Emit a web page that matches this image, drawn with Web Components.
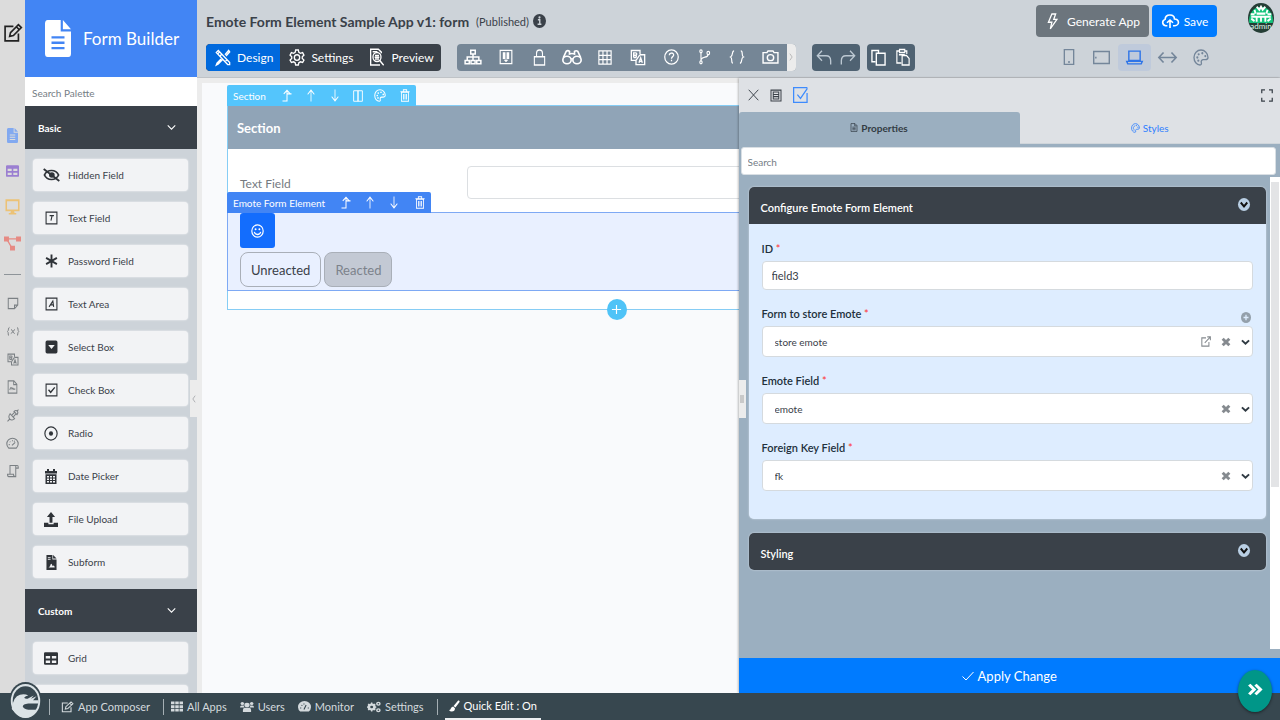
<!DOCTYPE html>
<html lang="en">
<head>
<meta charset="utf-8">
<meta name="viewport" content="width=device-width, initial-scale=1">
<title>Form Builder</title>
<style>
    body {
        margin: 0;
        font-family: Lato, "Open Sans", sans-serif;
        font-size: 12px;
        color: #3a4149;
        background: #cdd3d9;
    }
</style>
</head>
<body>
<fb-app></fb-app>

<script>
// shared reset, put in front of each component's own styles
const BASE = `
    *, *::before, *::after { box-sizing: border-box; }
    button, input, select { font: inherit; color: inherit; margin: 0; }
    button { border: 0; padding: 0; background: none; cursor: pointer; display: flex; align-items: center; justify-content: center; }
    a { color: inherit; text-decoration: none; }
`;

// stroke icons unless the shape says otherwise, all on a 24 x 24 grid
const F = 'fill="currentColor" stroke="none"';
const PALETTE = `<path d="M12 1.500C6 1.500 1.500 6 1.500 12s4 10.500 9 10.500c2 0 2.500-1.500 2-3-.8-2.500.5-4.500 3-4.500h3c2 0 4-1 4-3C22.500 6 17.500 1.500 12 1.500z"/><circle cx="6.500" cy="12" r="1.600" ${F}/><circle cx="8.500" cy="7.500" r="1.600" ${F}/><circle cx="14" cy="6" r="1.600" ${F}/><circle cx="18.500" cy="10" r="1.600" ${F}/><circle cx="8" cy="16.500" r="1.600" ${F}/>`;
const LANG = `<path d="M9 16H2V2h13v5M15 8h7v14H9v-6"/><path d="M5.500 12V5.500h3a1.600 1.600 0 0 1 0 3.300h-3M8.500 9a1.600 1.600 0 0 1 0 3h-3M13.500 19.500l2.500-7 2.500 7M14.500 17.500h3M15 8l-6 8"/>`;
const ICONS = {
    edit: `<path d="M12.500 4H2.500v17.500h16v-9"/><path d="M8 16l1-4.500L18.500 2l3.500 3.500L12.500 15zM16 4.500L19.500 8"/>`,
    file: `<path ${F} d="M0 2.500Q0 0 2.500 0h12v7.500H24V21.500q0 2.500-2.500 2.500h-19Q0 24 0 21.500zM16.500 0L24 6h-7.500zM6 10.500V12h12v-1.500zm0 3.500v1.500h12V14zm0 3.500V19h12v-1.500z" fill-rule="evenodd"/>`,
    table: `<path ${F} fill-rule="evenodd" d="M2 2h20q2 0 2 2v16q0 2-2 2H2q-2 0-2-2V4q0-2 2-2zm1 6v4h7.500V8zm10.500 0v4H21V8zM3 15v4h7.500v-4zm10.500 0v4H21v-4z"/>`,
    desktop: `<path stroke-width="2.500" d="M2 3h20v13.500H2z"/><path ${F} d="M9.500 17h5l.8 3H18v2H6v-2h2.700z"/>`,
    flow: `<path ${F} d="M0 2h7v7H0zM17 2h7v7h-7zM8.500 15h7v7h-7z"/><path d="M4 5.500h16M4 6l7 12" stroke-width="2"/>`,
    note: `<path d="M2.500 2.500h19V15L15 21.500H2.500zM15 21v-6h6"/>`,
    varx: `<path d="M5 3C2 3 4 10 1 12c3 2 0 9 3 9M20 3c3 0 1 7 3.500 9-3 2-1 9-3.500 9M8 7.500c3 0 4 9 7.500 9M16 7.500c-2 0-6 9-8.500 9"/>`,
    lang: LANG,
    fileimg: `<path d="M2.500 1.500H15l6.500 6v15h-19zM14.500 2v6H21M6 17c2-5 3.500-5 5-1.500 1-2 2-2 3 0h4"/>`,
    plug: `<path d="M1 23l5-5M6.500 9l8.500 8.500c-3 3.500-7 3.500-9.500 1s-2.500-6.500 1-9.500zM5.500 8l10.500 10.500M10 11l4.500-4.500M13 14l5-5M14 4.500c3-2.500 5-2 6.500-.5s2 3.500-.5 6.500zM20 4l3-3"/>`,
    gauge: `<path d="M5 20.500a10.500 10.500 0 1 1 14 0z"/><path d="M11 15.500l6-5.500M5 14h2M7 8.500l1 1M12 6v2M16 7l-1 1.500"/>`,
    scroll: `<path d="M6 17V2.500h14.500q2 0 2 3V7h-5M17.500 7V3M17.500 7v14.500h-14q-2.500 0-2.500-4h12q0 4 3 4"/>`,
    eyeoff: `<path d="M2 12c4-9 16-9 20 0-4 9-16 9-20 0z" stroke-width="2.500"/><circle cx="12.500" cy="12" r="4" ${F}/><path d="M1 3l22 18" stroke-width="2.500"/>`,
    boxt: `<path d="M2 2h20v20H2z"/><path d="M8.500 8h8M13 8.500l-2 8"/>`,
    boxa: `<path d="M2 2h20v20H2z"/><path d="M7.500 17l7-10 1.500 10M10 13.500h5"/>`,
    asterisk: `<path d="M12 1v22M2 6.500l20 11M22 6.500l-20 11" stroke-width="3.500"/>`,
    boxcaret: `<path ${F} fill-rule="evenodd" d="M4 1h16q3 0 3 3v16q0 3-3 3H4q-3 0-3-3V4q0-3 3-3zm2 7.500l6 7 6-7z"/>`,
    boxcheck: `<path d="M2 2h20v20H2z"/><path d="M6.500 11.500l4 4.500 7.500-8.500" stroke-width="2.500"/>`,
    radio: `<circle cx="12" cy="12" r="10.500"/><circle cx="12" cy="12" r="3.500" ${F}/>`,
    calendar: `<path ${F} fill-rule="evenodd" d="M4 0h4v3h8V0h4v3h4v4H0V3h4zM1 8.500h22V24H1zm3 2.500v2.500h4V11zm6 0v2.500h4V11zm6 0v2.500h4V11zM4 15v2.500h4V15zm6 0v2.500h4V15zm6 0v2.500h4V15zM4 19v2.500h4V19zm6 0v2.500h4V19zm6 0v2.500h4V19z"/>`,
    upload: `<path ${F} d="M12 0l7 8h-4.500v9h-5V8H5zM0 17h7.500v2.500h9V17H24v7H0z"/>`,
    subform: `<path ${F} fill-rule="evenodd" d="M1 0h13v7h9v17H1zM15.500 0L23 5.500h-7.500zM4 3v1.500h6V3zm0 3v1.500h6V6zm1 14h14c-1-3-2-4-4.500-2-1-2-2-4-3-4-2 0-1.500 5-6.500 6z"/>`,
    down: `<path d="M2 6.500l10 10 10-10" stroke-width="2.800"/>`,
    left: `<path d="M19 2L5 12l14 10" stroke-width="2.500"/>`,
    right: `<path d="M5 2l14 10L5 22" stroke-width="2.500"/>`,
    design: `<path d="M2 5l3-3 17 17v3h-3zM15 8l5.500-6L22 4l-5.500 6M9 14l-6 6-1 2.500L5 21l6-6M7 4L4 7M10 7.500L8 9.500M18 15l-2 2"/>`,
    gear: `<path d="M10 1.500h4l.8 3.300 2.300 1.300 3.300-1 2 3.500-2.500 2.300v2.400l2.500 2.300-2 3.500-3.300-1-2.300 1.300-.8 3.300h-4l-.8-3.300-2.300-1.300-3.300 1-2-3.500 2.500-2.300v-2.400L1.600 8.600l2-3.500 3.300 1 2.300-1.300z"/><circle cx="12" cy="12" r="4"/>`,
    preview: `<path d="M18.500 7V5.500L14 1.500H2.500v21h14"/><circle cx="12" cy="12" r="6"/><path d="M9 10h6M8.500 12.200h7M9 14.500h6M16 16.500l6 6.500M5.500 5h7"/>`,
    info: `<circle cx="12" cy="12" r="12" ${F}/><path d="M9 10h3.500v7M8.500 17.500h7" stroke="#cdd3d9" stroke-width="2.500"/><circle cx="12" cy="6" r="2" fill="#cdd3d9" stroke="none"/>`,
    sitemap: `<path d="M9 3h6v5H9zM1.500 16.500H7V21H1.500zM9.300 16.500h5.500V21H9.300zM17 16.500h5.500V21H17zM12 8v8M4.300 16v-4h15.500v4"/>`,
    receipt: `<path d="M2 2h20v20H2z"/><path ${F} d="M6.500 5h4v10h-4zM13.500 5h4v10h-4zM8 16h8l-4 4z"/><path d="M12 5v11" stroke-width="1.200"/>`,
    lock: `<path d="M2.500 11h19v11.500h-19zM6.500 11V6c0-6 11-6 11 0v5"/>`,
    binoculars: `<circle cx="6" cy="16" r="5"/><circle cx="18" cy="16" r="5"/><path d="M1.500 13L5 4.500q2-2 4 0V8q3-1.500 6 0V4.500q2-2 4 0L22.500 13M11 15q1-1 2 0"/>`,
    grid: `<path d="M1.500 1.500h21v21h-21zM1.500 8.500h21M1.500 15.500h21M8.500 1.500v21M15.500 1.500v21"/>`,
    help: `<circle cx="12" cy="12" r="10.800"/><path d="M8.500 9.500c0-4.500 7-4.500 7-.5 0 2.500-3.500 2.500-3.500 5.500M12 16v2.500"/>`,
    branch: `<circle cx="5.500" cy="3.500" r="2.200"/><circle cx="5.500" cy="20" r="2.200"/><circle cx="19" cy="6" r="2.500"/><path d="M5.500 6v12M18.500 8.500c0 5-10 2.500-12.500 7"/>`,
    braces: `<path d="M7 1.500C2.500 1.500 6 10 1 12c4 2 0 10.500 4 10.500M18.500 1.500c4.500 0 .5 8.500 4.500 10.500-5 2-1.500 10.500-6 10.500"/>`,
    camera: `<path d="M1.500 5.500H7L8.500 3h7L17 5.500h5.500V21h-21z"/><circle cx="12" cy="13" r="4.500"/>`,
    undo: `<path d="M9 2.500L2 9.500l7 7M2 9.500h13q7 0 7 7V22"/>`,
    redo: `<path d="M15 2.500l7 7-7 7M22 9.500H9q-7 0-7 7V22"/>`,
    copy: `<path d="M7 18H1.500V2H12v3M8.500 6h14v16.500h-14z" stroke-width="2.200"/>`,
    paste: `<path d="M9 20H1.500V4H5M15 4h3.500v4M6 2h9v4H6zM10.500 10H18l4.500 4v8.500h-12zM5 9h10"/>`,
    bolt: `<path d="M11 1.500h6L14 9h5L8.500 22.500 11 13H5.500z"/>`,
    cloud: `<path d="M8.500 19H6a5 5 0 0 1-.5-9.500C6 1 17.500 1 18 9a5 5 0 0 1 .5 10H16M12 22.500V11M8 14.500l4-4 4 4" stroke-width="2.200"/>`,
    phone: `<path d="M5 1h14v22H5zM10.500 19.500h3"/>`,
    tablet: `<path d="M1 3.500h22v17H1zM4 11v2.500"/>`,
    laptop: `<path d="M4 3h16v13H4zM1 17.500h22L21.500 21h-19z"/>`,
    arrows: `<path d="M1 12h22M7 5l-6 7 6 7M17 5l6 7-6 7"/>`,
    palette: PALETTE,
    close: `<path d="M1.500 1.500l21 21M22.500 1.500l-21 21"/>`,
    form: `<path d="M2 2h20v20H2zM6.500 5.500h11v13h-11zM6.500 10h11M6.500 14h11"/>`,
    check: `<path d="M1 13l7 7L23 4"/>`,
    tick: `<path d="M22.500 9v14H1V1h22M7 11.500l5 5.500L23 2"/>`,
    expand: `<path d="M1.500 8V1.500H8M16 1.500h6.500V8M22.500 16v6.500H16M8 22.500H1.500V16" stroke-width="2.500"/>`,
    level: `<path d="M3 22h9V3M5.500 9L12 2.500 18.500 9M12 9h9"/>`,
    up: `<path d="M12 23V2M4 10l8-8 8 8"/>`,
    downarr: `<path d="M12 1v21M4 14l8 8 8-8"/>`,
    columns: `<path d="M1.500 1.500H12v21H1.500zM12 1.500h10.500v21H12z"/>`,
    trash: `<path d="M3.500 6h17v16.500h-17zM1 5h22M8 4V1.500h8V4M8.500 9v10.500M12 9v10.500M15.500 9v10.500"/>`,
    smile: `<circle cx="12" cy="12" r="10.500" stroke-width="2.200"/><circle cx="8.500" cy="9" r="1.800" ${F}/><circle cx="15.500" cy="9" r="1.800" ${F}/><path d="M6 13.500c1.500 6 10.500 6 12 0" stroke-width="2.200"/>`,
    plus: `<path d="M12 2v20M2 12h20" stroke-width="2.500"/>`,
    doc: `<path d="M3 1.500h12L21 7v15.500H3zM14 2v5.500h6M7 11h10M7 14.500h10M7 18h10"/>`,
    chevcircle: `<circle cx="12" cy="12" r="12" fill="#b9cfe4" stroke="none"/><path d="M5.500 8.500l6.500 7 6.500-7" stroke="#111" stroke-width="4"/>`,
    pluscircle: `<circle cx="12" cy="12" r="12" ${F}/><path d="M12 6v12M6 12h12" stroke="#deedff" stroke-width="3"/>`,
    external: `<path d="M12 4H2v18h17v-9M15 2h7.500v7M22 2.500L9 15" stroke-width="2.500"/>`,
    times: `<path d="M4 4l16 16M20 4L4 20" stroke-width="7"/>`,
    caret: `<path d="M2.500 7l9.500 10 9.500-10" stroke-width="5"/>`,
    dbl: `<path d="M2 3l8 9-8 9M12 3l8 9-8 9" stroke-width="5"/>`,
    th: `<path ${F} d="M0 1h7v6H0zM8.500 1h7v6h-7zM17 1h7v6h-7zM0 9h7v6H0zM8.500 9h7v6h-7zM17 9h7v6h-7zM0 17h7v6H0zM8.500 17h7v6h-7zM17 17h7v6h-7z"/>`,
    users: `<g ${F}><circle cx="12" cy="8" r="4.500"/><circle cx="4" cy="5" r="3"/><circle cx="20" cy="5" r="3"/><path d="M5 22v-4q0-4.500 4-4.500h6q4 0 4 4.500v4zM0 13q0-4 3-4h3.500q0 3 1.500 4zM24 13q0-4-3-4h-3.500q0 3-1.500 4z"/></g>`,
    tacho: `<path ${F} d="M4 21a12 12 0 1 1 16 0z"/><path d="M11 17l4-9M4 14h2M6.500 8l1.500 1.500M18 14h2M11 5v2" stroke="#37474f"/>`,
    cogs: `<circle cx="8" cy="12" r="5" stroke-width="4"/><path d="M8 3v18M0 12h16M2 6l12 12M14 6L2 18" stroke-width="2.500"/><circle cx="8" cy="12" r="2.500" fill="#37474f" stroke="none"/><circle cx="19.500" cy="5.500" r="2.700" stroke-width="2.500"/><circle cx="19.500" cy="18.500" r="2.700" stroke-width="2.500"/>`,
    brush: `<path ${F} d="M20 1q4-1 3 3L14 15l-4-3zM9 13l4 3.500q0 6.500-7 6.500-4 0-6-3 3 0 4-3t5-4z"/>`,
    logo: `<circle cx="12" cy="12" r="12" fill="#37474f" stroke="none"/><circle cx="12" cy="12" r="10.700" fill="#dbe3e6" stroke="none"/><circle cx="12" cy="12" r="9.300" fill="#37474f" stroke="none"/><path d="M2 17Q3 9 8 8q3.500-.8 6 .5-2 .2-3 1.500 1 .8 2.500.5L18 8.500l-2 2L20 9l-2.500 2.500h4v2H14q-4 .3-4 2 .5 1.500 4 2h6q-3 5-8 5T2 17z" fill="#dbe3e6" stroke="none"/>`,
    avatar: `<circle cx="12" cy="12" r="12" fill="#243d35" stroke="none"/><path d="M1.200 16a11 11 0 1 1 21.600 0z" fill="#14c47c" stroke="none"/><path d="M8 3l2.500 2.500L12 3l1.500 2.500L16 3M2.500 9H6M8 8.500h8M18 9h3.500M3 12.500l3 2M8 11v4M12 10.500v4.500M16 11v4M21 12.500l-3 2M6 5.500l1 3M18 5.500l-1 3M3 11h18" stroke="#fff" stroke-width="1.700"/>`
};

const define = (tag, css, html) => customElements.define(tag, class extends HTMLElement {
    constructor() {
        super();
        this.attachShadow({ mode: "open" });
    }

    connectedCallback() {
        const attr = (name) => this.getAttribute(name) || "";
        const has = (name) => this.hasAttribute(name);
        this.shadowRoot.innerHTML = `<style>${BASE}${css}</style>${typeof html === "function" ? html(attr, has) : html}`;
    }
});

const icon = (name, w, h) => `<fb-icon name="${name}" w="${w}" h="${h || w}"></fb-icon>`;
const iconButton = (name, label, w, h) => `<button type="button" aria-label="${label}">${icon(name, w, h)}</button>`;

define("fb-icon", `
    :host { display: inline-flex; flex: none; }
    svg { display: block; overflow: visible; }
`, (attr) => `
    <svg width="${attr("w")}" height="${attr("h")}" viewBox="0 0 24 24" preserveAspectRatio="none" aria-hidden="true"
        fill="none" stroke="currentColor" stroke-width="2">${ICONS[attr("name")]}</svg>
`);

define("fb-rail", `
    :host { display: flex; flex-direction: column; background: #dcdcdc; color: #7b8084; }
    .home { height: 66px; color: #222; }
    .home, nav button { width: 100%; }
    nav { display: grid; }
    .builders { grid-auto-rows: 36px; margin-top: 51px; }
    .tools { grid-auto-rows: 28px; }
    hr { width: 17px; margin: 13px auto 14px 4px; border: 0; border-top: 1px solid #8e9499; }
    .b1 { color: #82a9f0; } .b2 { color: #9b7fd1; } .b3 { color: #ecc276; } .b4 { color: #e68a83; }
`, `
    <button class="home" type="button" aria-label="Edit">${icon("edit", 20, 20)}</button>
    <nav class="builders">
        <button class="b1" type="button" aria-label="Form">${icon("file", 11, 15)}</button>
        <button class="b2" type="button" aria-label="List">${icon("table", 13, 14)}</button>
        <button class="b3" type="button" aria-label="Userview">${icon("desktop", 15, 18)}</button>
        <button class="b4" type="button" aria-label="Process">${icon("flow", 17)}</button>
    </nav>
    <hr>
    <nav class="tools">
        ${iconButton("note", "Notes", 12, 13)}
        ${iconButton("varx", "Variables", 12, 11)}
        ${iconButton("lang", "Localization", 12, 13)}
        ${iconButton("fileimg", "Resources", 11, 14)}
        ${iconButton("plug", "Plugins", 12, 13)}
        ${iconButton("gauge", "Performance", 13, 13)}
        ${iconButton("scroll", "Logs", 12, 14)}
    </nav>
`);

define("fb-palette-item", `
    :host { display: block; }
    button {
        width: 100%; height: 32px; padding-left: 10px; justify-content: flex-start; gap: 9px;
        font-size: 10px; background: #f2f3f5; border-radius: 4px; box-shadow: 0 0 2px rgba(255, 255, 255, .9);
    }
    .ico { width: 16px; display: flex; justify-content: center; color: #2f3338; }
`, (attr) => `
    <button type="button"><span class="ico">${icon(attr("icon"), attr("w") || 13, attr("h") || 14)}</span><slot></slot></button>
`);

define("fb-palette-group", `
    :host { display: block; }
    .head {
        width: 100%; height: 43px; padding: 0 21px 0 13px; justify-content: space-between;
        background: #3a4149; color: #fff; font-size: 10px; font-weight: 700;
    }
    .items { display: grid; gap: 11px; padding: 10px 9px 11px 8px; }
`, (attr) => `
    <button class="head" type="button">${attr("label")}${icon("down", 9, 9)}</button>
    <div class="items"><slot></slot></div>
`);

define("fb-palette", `
    :host { display: flex; flex-direction: column; min-height: 0; position: relative; background: #cdd3d9; }
    .brand { display: flex; align-items: center; gap: 12px; height: 77px; padding-left: 20px; background: #4285f4; color: #fff; font-size: 17px; }
    .search { width: 100%; height: 29px; padding: 3px 7px 0; border: 0; background: #fff; font-size: 10px; flex: none; }
    .search::placeholder { color: #757d85; opacity: 1; }
    .list { overflow: hidden; flex: 1; }
    .collapse { position: absolute; right: 0; top: 380px; width: 7px; height: 37px; background: #ececec; color: #8b8f94; }
`, `
    <div class="brand">${icon("file", 26, 37)}<span>Form Builder</span></div>
    <input class="search" type="search" placeholder="Search Palette" aria-label="Search Palette">
    <div class="list">
        <fb-palette-group label="Basic">
            <fb-palette-item icon="eyeoff" w="17" h="16">Hidden Field</fb-palette-item>
            <fb-palette-item icon="boxt">Text Field</fb-palette-item>
            <fb-palette-item icon="asterisk">Password Field</fb-palette-item>
            <fb-palette-item icon="boxa">Text Area</fb-palette-item>
            <fb-palette-item icon="boxcaret">Select Box</fb-palette-item>
            <fb-palette-item icon="boxcheck">Check Box</fb-palette-item>
            <fb-palette-item icon="radio" w="14" h="15">Radio</fb-palette-item>
            <fb-palette-item icon="calendar" w="12" h="15">Date Picker</fb-palette-item>
            <fb-palette-item icon="upload" w="14" h="15">File Upload</fb-palette-item>
            <fb-palette-item icon="subform" w="11" h="15">Subform</fb-palette-item>
        </fb-palette-group>
        <fb-palette-group label="Custom">
            <fb-palette-item icon="table" w="14" h="15">Grid</fb-palette-item>
            <fb-palette-item icon="boxt"></fb-palette-item>
        </fb-palette-group>
    </div>
    <button class="collapse" type="button" aria-label="Collapse palette">${icon("left", 4, 8)}</button>
`);

define("fb-header", `
    :host { display: flex; flex-direction: column; height: 78px; padding: 5px 0 0 9px; border-bottom: 1px solid #bfc3c7; background: #cdd3d9; }
    .row { display: flex; align-items: center; }
    .top { height: 32px; }
    .bottom { height: 28px; margin-top: 6px; }
    h1 { margin: 0; font-size: 14px; font-weight: 700; }
    .state { margin-left: 7px; font-size: 11px; }
    .info { margin-left: 4px; }
    .actions { margin-left: auto; display: flex; gap: 3px; height: 32px; color: #fff; }
    .actions button { gap: 7px; border-radius: 4px; }
    .generate { width: 113px; background: #6c757d; }
    .actions .save { width: 65px; gap: 5px; background: #007bff; }
    .avatar { margin: -2px 6px 0 31px; align-self: flex-start; position: relative; display: grid; }
    .avatar span { position: absolute; left: 0; right: 0; bottom: 3px; text-align: center; font-size: 8px; line-height: 8px; color: #dff5ea; }
    .modes, .tools, .pair { display: flex; height: 27px; border-radius: 4px; overflow: hidden; color: #fff; }
    .modes { background: #3a4149; }
    .modes button { gap: 6px; padding: 0 7px 0 9px; }
    .modes .on { background: #0069dd; border-radius: 4px 0 0 4px; }
    .tools { margin-left: 16px; background: #758696; }
    .tools button { width: 33px; }
    .tools .more { width: 9px; background: #ececec; color: #9a9a9a; }
    .pair { margin-left: 16px; background: #4f6272; }
    .pair + .pair { margin-left: 7px; }
    .pair button { width: 24px; color: #fff; }
    .dim button { color: #bcc8d2; }
    .devices { margin-left: auto; margin-right: 63px; display: flex; height: 27px; color: #74869a; }
    .devices button { width: 33px; border-radius: 4px; }
    .devices .on { background: #bfcadb; color: #2f75e8; }
`, `
    <div class="row top">
        <h1>Emote Form Element Sample App v1: form</h1>
        <span class="state">(Published)</span>
        <button class="info" type="button" aria-label="Information">${icon("info", 13, 14)}</button>
        <div class="actions">
            <button class="generate" type="button">${icon("bolt", 15, 17)}Generate App</button>
            <button class="save" type="button">${icon("cloud", 18, 16)}Save</button>
        </div>
        <div class="avatar">${icon("avatar", 26, 30)}<span>admin</span></div>
    </div>
    <div class="row bottom">
        <div class="modes">
            <button class="on" type="button">${icon("design", 16, 17)}Design</button>
            <button type="button">${icon("gear", 16, 17)}Settings</button>
            <button type="button">${icon("preview", 16, 18)}Preview</button>
        </div>
        <div class="tools">
            ${iconButton("sitemap", "Tree", 18, 18)}
            ${iconButton("receipt", "Usage", 14, 16)}
            ${iconButton("lock", "Permission", 13, 17)}
            ${iconButton("binoculars", "Find usages", 20, 18)}
            ${iconButton("grid", "Table view", 14, 15)}
            ${iconButton("lang", "Internationalization", 16, 17)}
            ${iconButton("help", "Tooltip", 15, 16)}
            ${iconButton("branch", "Diff", 13, 16)}
            ${iconButton("braces", "JSON definition", 14, 14)}
            ${iconButton("camera", "Screenshot", 17, 16)}
            <button class="more" type="button" aria-label="More tools">${icon("right", 4, 8)}</button>
        </div>
        <div class="pair dim">${iconButton("undo", "Undo", 16, 17)}${iconButton("redo", "Redo", 16, 17)}</div>
        <div class="pair">${iconButton("copy", "Copy", 15, 17)}${iconButton("paste", "Paste", 14, 18)}</div>
        <div class="devices">
            ${iconButton("phone", "Mobile", 16, 16)}
            ${iconButton("tablet", "Tablet", 17, 17)}
            <button class="on" type="button" aria-label="Desktop">${icon("laptop", 17, 17)}</button>
            ${iconButton("arrows", "Fit width", 19, 17)}
            ${iconButton("palette", "Theme", 16, 17)}
        </div>
    </div>
`);

define("fb-element-bar", `
    :host { display: flex; align-items: center; height: 21px; padding: 0 1px 0 6px; border-radius: 2px 2px 0 0; color: #fff; font-size: 10px; white-space: nowrap; }
    span { margin-right: 9px; }
    button { width: 24px; height: 100%; }
    button:last-child { width: 20px; margin-left: 4px; }
`, (attr) => `
    <span>${attr("label")}</span>
    ${iconButton("level", "Select parent", 12, 13)}
    ${iconButton("up", "Move up", 10, 13)}
    ${iconButton("downarr", "Move down", 10, 13)}
    <slot></slot>
    ${iconButton("trash", "Delete", 10, 13)}
`);

define("fb-canvas", `
    :host { display: block; min-height: 0; overflow: hidden; padding: 22px 0 0 25px; border: solid #ececec; border-width: 5px 0 0 5px; background: #f9fafc; }
    .section { position: relative; width: 74%; border: 1px solid #86cdf5; background: #fff; }
    .section > fb-element-bar { position: absolute; left: -1px; bottom: 100%; background: #54c5fc; }
    h2 { margin: 0; height: 43px; padding-left: 9px; display: flex; align-items: center; background: #90a4b7; color: #fff; font-size: 13px; font-weight: 700; }
    .field { display: flex; padding: 17px 12px 13px; }
    .field label { width: 227px; padding-top: 10px; font-size: 12px; color: #757a7f; }
    .field input { flex: 1; height: 33px; border: 1px solid #dcdfe2; border-radius: 4px; background: #fff; }
    .selected { position: relative; margin: 0 -1px; padding: 0 12px 3px; border: 1px solid #7ea9f4; background: #e9f0ff; }
    .selected fb-element-bar { position: absolute; left: -1px; bottom: 100%; background: #4285f4; }
    .react { width: 35px; height: 35px; border-radius: 3px; background: #136dfd; color: #fff; }
    .states { display: flex; gap: 3px; margin-top: 4px; }
    .states button { height: 35px; padding: 0 10px; font-size: 13px; border: 1px solid #a9afb8; border-radius: 8px; }
    .states .off { background: #c3c9d4; color: #7c828b; }
    .add { width: 20px; height: 21px; margin: 8px auto -11px; border-radius: 50%; background: #4fc3f7; color: #fff; position: relative; }
    .cell { width: 22px; }
`, `
    <div class="section">
        <fb-element-bar label="Section">
            <button class="cell" type="button" aria-label="Columns">${icon("columns", 10, 12)}</button>
            <button class="cell" type="button" aria-label="Style">${icon("palette", 12, 13)}</button>
        </fb-element-bar>
        <h2>Section</h2>
        <div class="field"><label for="tf">Text Field</label><input id="tf" type="text"></div>
        <div class="selected">
            <fb-element-bar label="Emote Form Element"></fb-element-bar>
            <button class="react" type="button" aria-label="React">${icon("smile", 13, 14)}</button>
            <div class="states">
                <button type="button">Unreacted</button>
                <button class="off" type="button">Reacted</button>
            </div>
        </div>
        <button class="add" type="button" aria-label="Add section">${icon("plus", 11)}</button>
    </div>
`);

define("fb-property", `
    :host { display: block; }
    .label { display: flex; justify-content: space-between; align-items: center; height: 16px; margin-bottom: 5px; font-size: 11px; font-weight: 600; color: #22303c; }
    .label i { color: #f33; font-style: normal; font-weight: 400; }
    .label button { color: #94a0ab; padding: 8px 2px 0 0; }
    .box { display: flex; align-items: center; height: 31px; border: 1px solid #d5dade; border-radius: 4px; background: #fff; }
    .box.text { height: 29px; }
    input { flex: 1; min-width: 0; height: 100%; padding: 0 9px; border: 0; background: none; font-size: 11px; }
    select { flex: 1; min-width: 0; height: 100%; padding: 0 12px; border: 0; background: none; appearance: none; font-size: 10px; }
    .tool { margin-right: 10px; color: #858a8f; }
    .caret { margin-right: 2px; color: #2f3a42; pointer-events: none; }
`, (attr, has) => `
    <div class="label">
        <label for="f">${attr("label")} <i>*</i></label>
        ${has("addable") ? iconButton("pluscircle", "Add new", 10, 11) : ""}
    </div>
    ${has("text") ? `<div class="box text"><input id="f" type="text" value="${attr("value")}"></div>` : `
    <div class="box">
        <select id="f"><option>${attr("value")}</option></select>
        ${has("addable") ? `<button class="tool" type="button" aria-label="Open">${icon("external", 10, 11)}</button>` : ""}
        <button class="tool" type="button" aria-label="Clear">${icon("times", 10, 10)}</button>
        <span class="caret">${icon("caret", 9, 8)}</span>
    </div>`}
`);

define("fb-card", `
    :host { display: block; border-radius: 5px; overflow: hidden; background: #deedff; box-shadow: 0 0 2px rgba(255, 255, 255, .6); }
    .head { width: 100%; height: 37px; padding: 3px 16px 0 12px; justify-content: space-between; background: #3a4149; color: #fff; font-size: 11px; font-weight: 600; }
    .head fb-icon { margin-bottom: 5px; }
`, (attr) => `
    <button class="head" type="button">${attr("label")}${icon("chevcircle", 12, 13)}</button>
    <slot></slot>
`);

define("fb-properties", `
    :host { display: flex; flex-direction: column; background: #9bafc0; box-shadow: -1px 0 2px rgba(0, 0, 0, .25); }
    .bar { display: flex; align-items: center; height: 34px; gap: 11px; padding: 0 7px 0 9px; background: #dee1e5; }
    .bar .on { color: #3d8bfd; }
    .bar button:last-child { margin-left: auto; }
    .tabs { display: grid; grid-template-columns: 281px 1fr; height: 32px; background: #dee1e5; }
    .tabs button { gap: 3px; font-size: 10px; border-bottom: 1px solid #cfd5da; color: #2f80ff; }
    .tabs .on { background: #9bafc0; border-color: #9bafc0; border-radius: 3px 3px 0 0; color: #333c44; font-weight: 700; }
    .search { height: 28px; margin: 3px 4px 2px 2px; padding: 2px 6px 0; border: 1px solid #d9dfe4; border-radius: 3px; background: #fff; font-size: 10px; }
    .search::placeholder { color: #757d85; opacity: 1; }
    .body { flex: 1; min-height: 0; display: flex; }
    .cards { flex: 1; display: flex; flex-direction: column; gap: 14px; padding: 10px 4px 0 10px; }
    .fields { display: grid; gap: 15px; padding: 16px 13px 28px; }
    .scroll { width: 10px; margin-bottom: 9px; padding: 5px 1px; background: #fff; }
    .scroll div { height: 66%; background: #e3e4e6; }
    .apply { height: 35px; gap: 4px; background: #007bff; color: #fff; font-size: 13px; }
    .handle { position: absolute; left: 0; top: 302px; width: 7px; height: 38px; background: #ececec; }
    .handle::before { content: ""; width: 4px; height: 8px; background: #c9c9c9; }
`, `
    <div class="bar">
        ${iconButton("close", "Close", 11, 12)}
        ${iconButton("form", "Form properties", 12, 13)}
        <button class="on" type="button" aria-label="Auto apply">${icon("tick", 15, 16)}</button>
        ${iconButton("expand", "Expand", 12, 13)}
    </div>
    <div class="tabs">
        <button class="on" type="button">${icon("doc", 8, 9)}Properties</button>
        <button type="button">${icon("palette", 9, 10)}Styles</button>
    </div>
    <input class="search" type="search" placeholder="Search" aria-label="Search">
    <div class="body">
        <div class="cards">
            <fb-card label="Configure Emote Form Element">
                <div class="fields">
                    <fb-property text label="ID" value="field3"></fb-property>
                    <fb-property addable label="Form to store Emote" value="store emote"></fb-property>
                    <fb-property label="Emote Field" value="emote"></fb-property>
                    <fb-property label="Foreign Key Field" value="fk"></fb-property>
                </div>
            </fb-card>
            <fb-card label="Styling"></fb-card>
        </div>
        <div class="scroll"><div></div></div>
    </div>
    <button class="apply" type="button">${icon("check", 12, 12)}Apply Change</button>
    <button class="handle" type="button" aria-label="Resize panel"></button>
`);

define("fb-admin-bar", `
    :host { display: flex; align-items: center; height: 27px; padding-left: 9px; position: relative; background: #37474f; color: #d4dadd; font-size: 11px; }
    nav { display: flex; align-items: center; height: 100%; }
    a { display: flex; align-items: center; gap: 4px; height: 100%; white-space: nowrap; }
    nav a { margin-right: 13px; }
    .logo { align-self: flex-end; height: 38px; }
    .sep { width: 1px; height: 16px; background: #a5afb4; }
    .logo + .sep { margin: 0 11px 0 7px; }
    nav + .sep { margin-right: 7px; }
    .edit { padding: 0 4px; color: #fff; border-bottom: 2px solid #eceff1; }
    .fab { position: absolute; right: 8px; bottom: 8px; width: 34px; height: 42px; border-radius: 50%; background: #009688; color: #fff; box-shadow: 0 1px 3px rgba(0, 0, 0, .5); }
    .fab fb-icon { margin-bottom: 4px; }
`, `
    <a class="logo" href="#" aria-label="Home">${icon("logo", 33, 38)}</a>
    <span class="sep"></span>
    <nav><a href="#">${icon("edit", 13, 12)}App Composer</a></nav>
    <span class="sep"></span>
    <nav>
        <a href="#">${icon("th", 12, 11)}All Apps</a>
        <a href="#">${icon("users", 14, 12)}Users</a>
        <a href="#">${icon("tacho", 13, 12)}Monitor</a>
        <a href="#">${icon("cogs", 14, 12)}Settings</a>
    </nav>
    <span class="sep"></span>
    <a class="edit" href="#">${icon("brush", 11, 12)}Quick Edit : On</a>
    <button class="fab" type="button" aria-label="Show more">${icon("dbl", 15, 13)}</button>
`);

define("fb-app", `
    :host { display: grid; grid-template: minmax(0, 1fr) auto / 25px 172px minmax(0, 1fr); height: 100vh; overflow: hidden; }
    .main { display: grid; grid-template-rows: auto minmax(0, 1fr); position: relative; min-height: 0; }
    .work { position: relative; display: grid; min-height: 0; }
    fb-properties { position: absolute; right: 0; top: 0; bottom: 0; width: 50%; }
    fb-admin-bar { grid-column: 1 / -1; z-index: 2; }
`, `
    <fb-rail></fb-rail>
    <fb-palette></fb-palette>
    <div class="main">
        <fb-header></fb-header>
        <div class="work">
            <fb-canvas></fb-canvas>
            <fb-properties></fb-properties>
        </div>
    </div>
    <fb-admin-bar></fb-admin-bar>
`);
</script>
</body>
</html>
